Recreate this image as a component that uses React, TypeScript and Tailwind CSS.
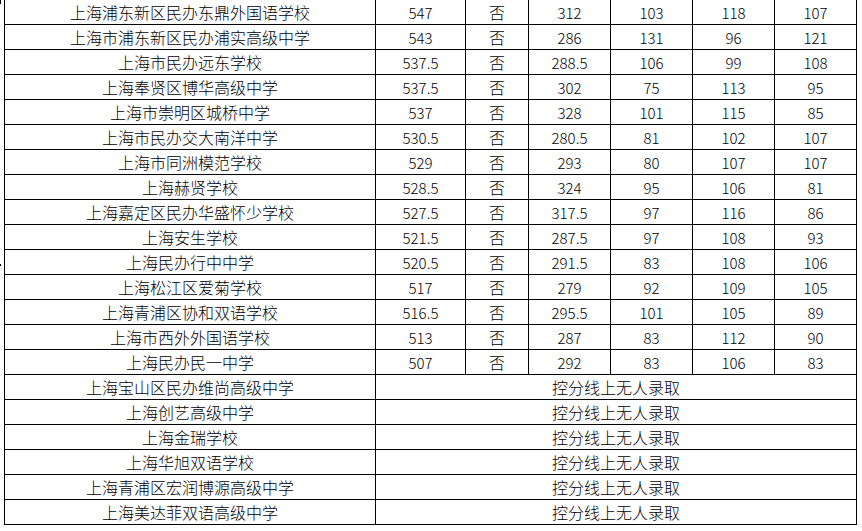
import React from "react";

type Row = {
  name: string;
  total?: string;
  flag?: string;
  a?: string;
  b?: string;
  c?: string;
  d?: string;
  note?: string;
};

const rows: Row[] = [
  { name: "上海浦东新区民办东鼎外国语学校", total: "547", flag: "否", a: "312", b: "103", c: "118", d: "107" },
  { name: "上海市浦东新区民办浦实高级中学", total: "543", flag: "否", a: "286", b: "131", c: "96", d: "121" },
  { name: "上海市民办远东学校", total: "537.5", flag: "否", a: "288.5", b: "106", c: "99", d: "108" },
  { name: "上海奉贤区博华高级中学", total: "537.5", flag: "否", a: "302", b: "75", c: "113", d: "95" },
  { name: "上海市崇明区城桥中学", total: "537", flag: "否", a: "328", b: "101", c: "115", d: "85" },
  { name: "上海市民办交大南洋中学", total: "530.5", flag: "否", a: "280.5", b: "81", c: "102", d: "107" },
  { name: "上海市同洲模范学校", total: "529", flag: "否", a: "293", b: "80", c: "107", d: "107" },
  { name: "上海赫贤学校", total: "528.5", flag: "否", a: "324", b: "95", c: "106", d: "81" },
  { name: "上海嘉定区民办华盛怀少学校", total: "527.5", flag: "否", a: "317.5", b: "97", c: "116", d: "86" },
  { name: "上海安生学校", total: "521.5", flag: "否", a: "287.5", b: "97", c: "108", d: "93" },
  { name: "上海民办行中中学", total: "520.5", flag: "否", a: "291.5", b: "83", c: "108", d: "106" },
  { name: "上海松江区爱菊学校", total: "517", flag: "否", a: "279", b: "92", c: "109", d: "105" },
  { name: "上海青浦区协和双语学校", total: "516.5", flag: "否", a: "295.5", b: "101", c: "105", d: "89" },
  { name: "上海市西外外国语学校", total: "513", flag: "否", a: "287", b: "83", c: "112", d: "90" },
  { name: "上海民办民一中学", total: "507", flag: "否", a: "292", b: "83", c: "106", d: "83" },
  { name: "上海宝山区民办维尚高级中学", note: "控分线上无人录取" },
  { name: "上海创艺高级中学", note: "控分线上无人录取" },
  { name: "上海金瑞学校", note: "控分线上无人录取" },
  { name: "上海华旭双语学校", note: "控分线上无人录取" },
  { name: "上海青浦区宏润博源高级中学", note: "控分线上无人录取" },
  { name: "上海美达菲双语高级中学", note: "控分线上无人录取" },
];

const cell = "h-full flex items-center justify-center border-r border-black shrink-0";
const num = "text-[15px]";

export default function App() {
  return (
    <div
      className="relative w-[862px] h-[531px] bg-white text-black overflow-hidden font-light"
      style={{ fontFamily: '"Noto Sans CJK SC", "Liberation Sans", sans-serif' }}
    >
      {/* stray marks at the left edge */}
      <span className="absolute left-0 top-0 w-px h-[4px] bg-black" />
      <span className="absolute left-0 top-[264px] w-px h-[2px] bg-black" />

      <div className="ml-1 w-[853px]">
        {rows.map((r, i) => (
          <div key={i} className="flex h-[25px] border-b border-black leading-none">
            <div className={`${cell} w-[372px] border-l text-[16px]`}>{r.name}</div>
            {r.note ? (
              <div className={`${cell} w-[481px] text-[16px]`}>{r.note}</div>
            ) : (
              <>
                <div className={`${cell} w-[90px] ${num}`}>{r.total}</div>
                <div className={`${cell} w-[63px] text-[16px]`}>{r.flag}</div>
                <div className={`${cell} w-[82px] ${num}`}>{r.a}</div>
                <div className={`${cell} w-[82px] ${num}`}>{r.b}</div>
                <div className={`${cell} w-[82px] ${num}`}>{r.c}</div>
                <div className={`${cell} w-[82px] ${num}`}>{r.d}</div>
              </>
            )}
          </div>
        ))}
      </div>
    </div>
  );
}
